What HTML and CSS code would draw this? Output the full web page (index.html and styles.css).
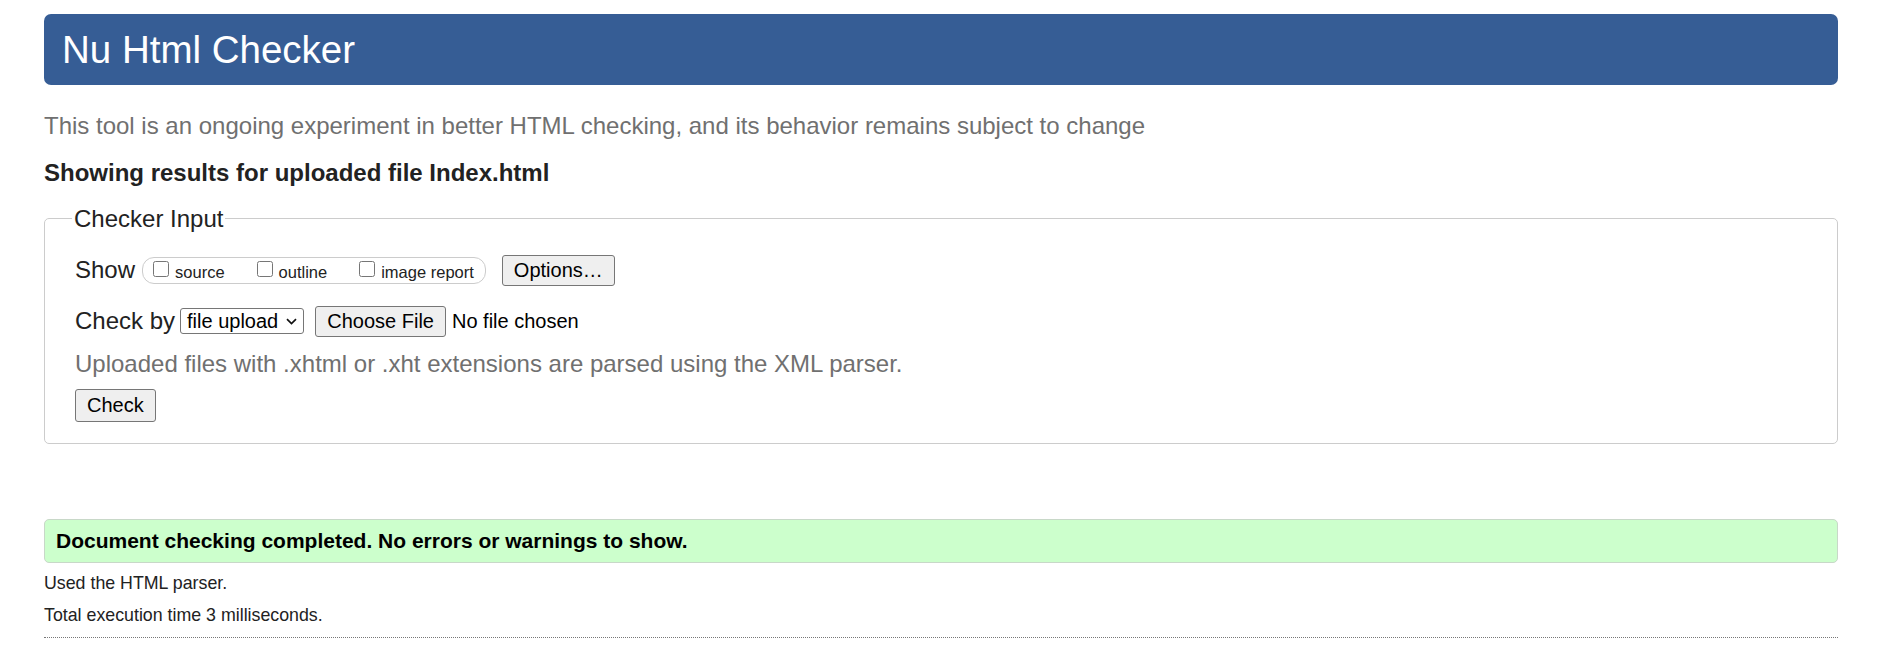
FILE: index.html
```html
<!DOCTYPE html>
<html lang="en">
<head>
<meta charset="utf-8">
<title>Showing results for uploaded file Index.html - Nu Html Checker</title>
<link rel="stylesheet" href="styles.css">
</head>
<body>
<h1 class="title">Nu Html Checker</h1>
<p class="intro">This tool is an ongoing experiment in better HTML checking, and its behavior remains subject to change</p>
<h2 class="results-for">Showing results for uploaded file Index.html</h2>
<form class="checker-form">
  <fieldset class="input-box">
    <legend class="input-legend">Checker Input</legend>
    <div class="row">
      <span class="row-label">Show</span>
      <span class="show-group">
        <label class="show-opt"><input type="checkbox" class="cb">source</label>
        <label class="show-opt"><input type="checkbox" class="cb">outline</label>
        <label class="show-opt"><input type="checkbox" class="cb">image report</label>
      </span>
      <button type="button" class="btn btn-options">Options…</button>
    </div>
    <div class="row">
      <span class="row-label">Check by</span>
      <span class="select-box">file upload<svg class="chev" width="11" height="7" viewBox="0 0 11 7"><path d="M1 1.2 L5.5 5.5 L10 1.2" fill="none" stroke="#111" stroke-width="1.7"/></svg></span>
      <button type="button" class="btn btn-file">Choose File</button>
      <span class="file-status">No file chosen</span>
    </div>
    <p class="hint">Uploaded files with .xhtml or .xht extensions are parsed using the XML parser.</p>
    <button type="button" class="btn btn-check">Check</button>
  </fieldset>
</form>
<div class="success">Document checking completed. No errors or warnings to show.</div>
<p class="meta">Used the HTML parser.</p>
<p class="meta">Total execution time 3 milliseconds.</p>
<hr class="rule">
</body>
</html>
```
FILE: styles.css
```css
html { background: #fff; }
body {
  margin: 0;
  padding: 14px 56px 0 44px;
  font-family: "Liberation Sans", Arial, sans-serif;
  color: #222;
}
.title {
  margin: 0;
  height: 71px;
  box-sizing: border-box;
  padding: 0 18px;
  background: #365d95;
  color: #fff;
  border-radius: 7px;
  font-size: 38.5px;
  font-weight: normal;
  line-height: 71px;
}
.intro {
  margin: 27px 0 0;
  font-size: 24px;
  line-height: 27px;
  color: #707070;
}
.results-for {
  margin: 20px 0 0;
  font-size: 24px;
  line-height: 27px;
  font-weight: bold;
  color: #222;
}
.checker-form { margin: 19px 0 0; }
.input-box {
  margin: 0;
  border: 1px solid #ccc;
  border-radius: 5px;
  padding: 10px 18px 21px 30px;
}
.input-legend {
  padding: 0 2px;
  margin-left: -3px;
  font-size: 24px;
  line-height: 27px;
  color: #222;
}
.row {
  display: flex;
  align-items: center;
  height: 32px;
  margin-top: 12px;
  font-size: 24px;
  color: #222;
}
.row + .row { margin-top: 19px; }
.row-label { margin-right: 7px; }
.show-group {
  display: inline-flex;
  align-items: center;
  height: 27px;
  box-sizing: border-box;
  border: 1px solid #ccc;
  border-radius: 12px;
  padding: 0 11px 0 10px;
  gap: 32px;
  margin-right: 16px;
}
.show-opt {
  display: inline-flex;
  align-items: center;
  font-size: 16.5px;
  color: #222;
  padding-top: 4px;
}
.cb {
  width: 16px;
  height: 16px;
  margin: 0 6px 6px 0;
}
.btn {
  font-family: "Liberation Sans", Arial, sans-serif;
  background: #efefef;
  border: 1px solid #767676;
  border-radius: 3px;
  color: #000;
  padding: 0 11px;
  cursor: default;
}
.btn-options { height: 31px; font-size: 20px; }
.select-box {
  display: inline-flex;
  align-items: center;
  gap: 8px;
  height: 26px;
  box-sizing: border-box;
  border: 1px solid #767676;
  border-radius: 3px;
  padding: 0 6px 0 6px;
  font-size: 20px;
  color: #000;
  margin-left: -2px;
  margin-right: 11px;
}
.btn-file { height: 31px; font-size: 20px; }
.file-status { margin-left: 6px; font-size: 20px; color: #000; }
.hint {
  margin: 13px 0 0;
  font-size: 24px;
  line-height: 27px;
  color: #707070;
}
.btn-check {
  display: block;
  margin-top: 12px;
  height: 33px;
  font-size: 20px;
  padding: 0 11px;
}
.success {
  margin-top: 75px;
  height: 44px;
  box-sizing: border-box;
  background: #ccffcc;
  border: 1px solid #c8d8c8;
  border-radius: 5px;
  padding: 0 11px;
  font-size: 21px;
  line-height: 42px;
  font-weight: bold;
  color: #000;
}
.meta {
  margin: 10px 0 0;
  font-size: 17.8px;
  line-height: 20px;
  color: #222;
}
.meta + .meta { margin-top: 12px; }
.rule {
  margin: 12px 0 0;
  border: 0;
  border-top: 1px dotted #777;
}
```
